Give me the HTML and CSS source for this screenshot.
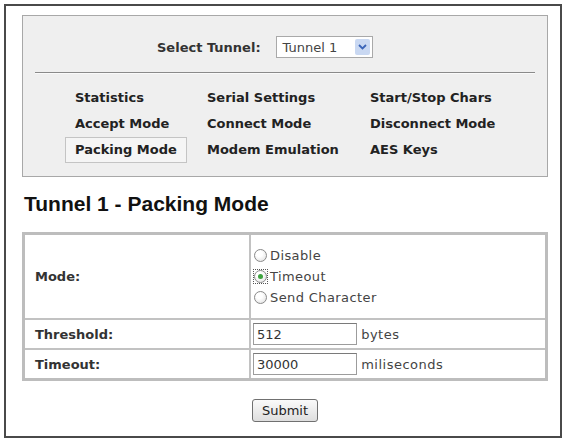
FILE: index.html
```html
<!DOCTYPE html>
<html lang="en">
<head>
    <meta charset="utf8"/>
    <title>Tunnel 1 - Packing Mode</title>
    <meta name="viewport" content="width=device-width, initial-scale=1.0"/>
    <link rel="stylesheet" href="styles.css">
</head>

<body>
<div class="caption"><span>Figure 5-8. Tunnel Packing Mode (Tunnel 1 Configuration)</span></div>

<div class="frame">
    <div class="panel">
        <div class="tunnel-row">
            <span class="tunnel-label">Select Tunnel:</span>
            <div class="select">
                <span class="select-text">Tunnel 1</span>
                <span class="select-arrow">
                    <svg width="9" height="6" viewBox="0 0 9 6"><path d="M1 1 L4.5 4.5 L8 1" fill="none" stroke="#3a64b8" stroke-width="1.8"/></svg>
                </span>
            </div>
        </div>
        <hr class="divider">
        <ul class="tunnelnav">
            <li><a href="#">Statistics</a></li>
            <li><a href="#">Serial Settings</a></li>
            <li><a href="#">Start/Stop Chars</a></li>
            <li><a href="#">Accept Mode</a></li>
            <li><a href="#">Connect Mode</a></li>
            <li><a href="#">Disconnect Mode</a></li>
            <li><a class="active" href="#">Packing Mode</a></li>
            <li><a href="#">Modem Emulation</a></li>
            <li><a href="#">AES Keys</a></li>
        </ul>
    </div>

    <h2 class="title">Tunnel 1 - Packing Mode</h2>

    <table class="settings">
        <tr class="mode-row">
            <td class="label">Mode:</td>
            <td class="value">
                <div class="radio-line"><span class="radio"></span>Disable</div>
                <div class="radio-line"><span class="focus"><span class="radio checked"></span></span>Timeout</div>
                <div class="radio-line"><span class="radio"></span>Send Character</div>
            </td>
        </tr>
        <tr>
            <td class="label">Threshold:</td>
            <td class="value"><input class="field" type="text" value="512"> <span class="unit">bytes</span></td>
        </tr>
        <tr>
            <td class="label">Timeout:</td>
            <td class="value"><input class="field" type="text" value="30000"> <span class="unit">miliseconds</span></td>
        </tr>
    </table>

    <div class="actions">
        <button class="btn">Submit</button>
    </div>
</div>
</body>
</html>
```

FILE: styles.css
```css
body {
    margin: 0;
    background: #fff;
    font-family: "DejaVu Sans", Verdana, sans-serif;
    font-size: 13px;
    color: #222;
}

/* only the bottom of the figure caption is visible */
.caption {
    height: 3px;
    overflow: hidden;
    display: flex;
    align-items: flex-end;
    justify-content: center;
    margin-bottom: 1px;
}

.caption span {
    font-family: "Liberation Sans", Arial, sans-serif;
    font-weight: bold;
    font-size: 17px;
    line-height: 1.3;
    white-space: nowrap;
}

.frame {
    margin: 0 5px 0 4px;
    border: 2px solid #4a4a4a;
    padding: 9px 12px 14px 16px;
}

.panel {
    border: 1px solid #a8a8a8;
    background: #efefef;
    padding: 20px 0 13px 0;
}

.tunnel-row {
    display: flex;
    align-items: center;
    padding-left: 134px;
    height: 22px;
}

.tunnel-label {
    font-weight: bold;
    color: #333;
    margin-right: 15px;
}

.select {
    display: flex;
    align-items: center;
    justify-content: space-between;
    height: 20px;
    width: 87px;
    border: 1px solid #a9a9a9;
    background: #fff;
    padding: 0 2px 0 6px;
}

.select-text {
    color: #444;
}

.select-arrow {
    display: flex;
    align-items: center;
    justify-content: center;
    width: 15px;
    height: 16px;
    background: #c9d8f2;
    border-radius: 2px;
}

.divider {
    border: none;
    border-top: 1px solid #8a8a8a;
    border-bottom: 1px solid #fafafa;
    margin: 14px 12px 11px 12px;
}

ul.tunnelnav {
    list-style-type: none;
    margin: 0 0 0 42px;
    padding: 0;
    display: grid;
    grid-template-columns: 132px 163px auto;
    grid-auto-rows: 26px;
    justify-items: start;
    align-items: center;
}

ul.tunnelnav li a {
    display: block;
    padding: 0 9px;
    line-height: 24px;
    border: 1px solid transparent;
    color: #222;
    font-weight: bold;
    text-decoration: none;
}

ul.tunnelnav li a.active {
    border-color: #c4c4c4;
    background: #f5f5f5;
}

.title {
    font-family: "Liberation Sans", Arial, sans-serif;
    font-size: 21px;
    line-height: 24px;
    color: #111;
    margin: 15px 0 16px 2px;
}

.settings {
    width: 100%;
    border-collapse: collapse;
    border: 3px solid #bdbdbd;
}

.settings td {
    border: 2px solid #c2c2c2;
    padding: 3px 2px;
}

.settings td.label {
    width: 212px;
    padding-left: 10px;
    font-weight: bold;
    color: #333;
}

.mode-row td {
    height: 77px;
}

.radio-line {
    display: flex;
    align-items: center;
    height: 21px;
    color: #444;
    letter-spacing: 0.4px;
}

.radio {
    display: inline-block;
    width: 11px;
    height: 11px;
    border: 1px solid #8a8a8a;
    border-radius: 50%;
    background: radial-gradient(circle at 40% 35%, #fff 30%, #dcdcdc 100%);
    margin: 0 3px 0 1px;
    position: relative;
}

.focus {
    display: inline-flex;
    border: 1px dotted #555;
    margin: 0 2px 0 0;
}

.focus .radio {
    margin: 0;
}

.radio.checked::after {
    content: "";
    position: absolute;
    left: 3px;
    top: 3px;
    width: 5px;
    height: 5px;
    border-radius: 50%;
    background: #3ea23e;
}

.field {
    width: 96px;
    height: 20px;
    border: 1px solid #9c9c9c;
    border-top-color: #7a7a7a;
    padding: 0 3px;
    font-family: "DejaVu Sans", Verdana, sans-serif;
    font-size: 13px;
    color: #333;
    vertical-align: middle;
    margin: 0;
}

.unit {
    color: #444;
    letter-spacing: 0.5px;
    vertical-align: middle;
}

.actions {
    text-align: center;
    margin-top: 18px;
}

.btn {
    font-family: "DejaVu Sans", Verdana, sans-serif;
    font-size: 13px;
    color: #222;
    width: 66px;
    height: 23px;
    padding: 0;
    border: 1px solid #707070;
    border-radius: 3px;
    background: linear-gradient(#fafafa, #dedede);
    cursor: pointer;
}
```
